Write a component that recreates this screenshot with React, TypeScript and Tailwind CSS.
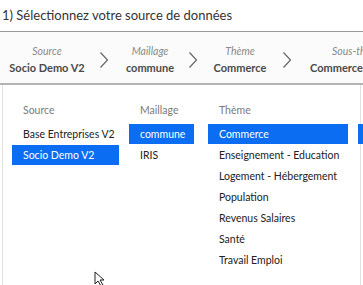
const STEPS = [
  { label: 'Source', value: 'Socio Demo V2', w: 'w-[94px] items-center' },
  { label: 'Maillage', value: 'commune', w: 'w-[72px] items-center' },
  { label: 'Thème', value: 'Commerce', w: 'w-[80px] items-center' },
  { label: 'Sous-thème', value: 'Commerce', w: 'w-[110px] items-start pl-[16px]' },
];

const CHEVRON_W = ['w-[20px]', 'w-[14px]', 'w-[14px]'];

const COLUMNS = [
  {
    title: 'Source',
    cls: 'w-[107px]',
    items: ['Base Entreprises V2', 'Socio Demo V2'],
    selected: 1,
  },
  {
    title: 'Maillage',
    cls: 'ml-[10px] w-[65px]',
    items: ['commune', 'IRIS'],
    selected: 0,
  },
  {
    title: 'Thème',
    cls: 'ml-[14px] w-[140px]',
    items: [
      'Commerce',
      'Enseignement - Education',
      'Logement - Hébergement',
      'Population',
      'Revenus Salaires',
      'Santé',
      'Travail Emploi',
    ],
    selected: 0,
  },
  {
    title: '',
    cls: 'ml-[10px] w-[60px]',
    items: [' '],
    selected: 0,
  },
];

function Chevron() {
  return (
    <svg width="10" height="18" viewBox="0 0 10 18" fill="none">
      <polyline points="1.5,1.5 8.5,9 1.5,16.5" stroke="#666" strokeWidth="1.2" />
    </svg>
  );
}

export default function App() {
  return (
    <div className="relative h-[285px] w-[363px] overflow-hidden bg-white font-['Lato',sans-serif] text-[#222]">
      {/* Title */}
      <div className="flex h-[31px] items-center pl-[2px] text-[13px] text-[#333]">
        1) Sélectionnez votre source de données
      </div>

      {/* Breadcrumb */}
      <div className="flex h-[54px] items-center overflow-hidden border-t border-b-2 border-t-[#9a9a9a] border-b-[#b4b4b4] bg-[#fbfbfb] pt-[4px]">
        {STEPS.map((s, i) => (
          <div key={s.label} className="flex shrink-0 items-center">
            <div className={`${s.w} flex shrink-0 flex-col whitespace-nowrap`}>
              <span className={`text-[10.5px] italic leading-[15px] text-[#8a8a8a] ${i === 3 ? 'pl-[22px]' : ''}`}>
                {s.label}
              </span>
              <span className="text-[11px] font-bold leading-[17px] text-[#4a4a4a]">{s.value}</span>
            </div>
            {i < CHEVRON_W.length && (
              <div className={`${CHEVRON_W[i]} flex shrink-0 justify-center`}>
                <Chevron />
              </div>
            )}
          </div>
        ))}
      </div>

      {/* Lists */}
      <div className="mx-[2px] flex h-[200px] border-x border-[#e2e2e2] pl-[9px] pt-[15px] text-[10.5px]">
        {COLUMNS.map((c) => (
          <div key={c.title || 'next'} className={`${c.cls} shrink-0`}>
            <div className="mb-[4px] h-[20px] pl-[11px] leading-[20px] text-[#7a7a7a]">{c.title}</div>
            {c.items.map((it, j) => (
              <div key={it} className="h-[21px]">
                <div
                  className={`h-[20px] whitespace-nowrap pl-[11px] leading-[20px] ${
                    j === c.selected ? 'bg-[#0b6ef2] text-white' : ''
                  }`}
                >
                  {it}
                </div>
              </div>
            ))}
          </div>
        ))}
      </div>

      {/* Horizontal scrollbar */}
      <div className="ml-[12px] h-[4px] bg-[#d4d4d4]" />

      {/* Mouse cursor */}
      <svg className="absolute left-[94px] top-[271px]" width="12" height="16" viewBox="0 0 12 16">
        <path d="M1 1 L1 13 L4 10 L7 15 L9 14 L6 9 L10 9 Z" fill="white" stroke="#222" strokeWidth="1" />
      </svg>
    </div>
  );
}
